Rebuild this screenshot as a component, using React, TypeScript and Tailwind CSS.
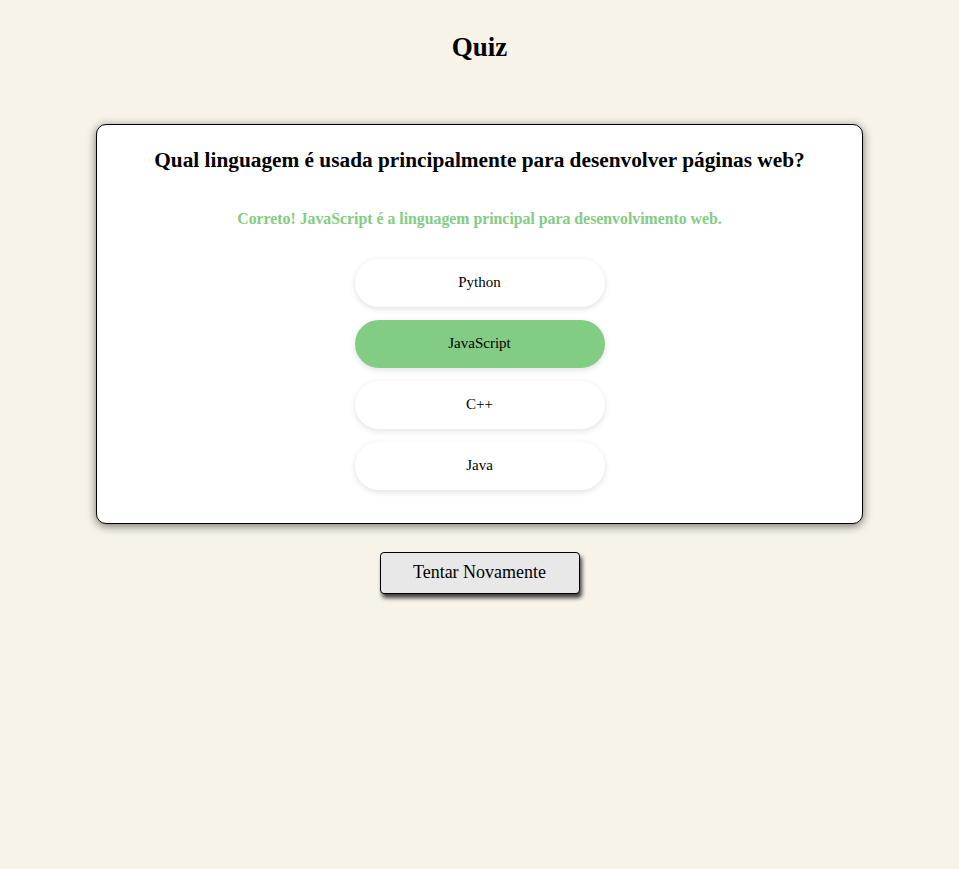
import React from 'react'

const options = ['Python', 'JavaScript', 'C++', 'Java']

const App = () => {
    const correct = 'JavaScript'
    return (
        <div className="min-h-screen w-full bg-[#f7f3e9] font-['Liberation_Serif',serif] text-black flex flex-col items-center">
            <h1 className="mt-[28px] text-[27px] font-bold leading-[38px]">Quiz</h1>

            <div className="mt-[58px] w-4/5 bg-white border border-black rounded-[10px] shadow-[0_2px_10px_rgba(0,0,0,0.55)] flex flex-col items-center pt-[21px] pb-[33px]">
                <h2 className="text-[21.3px] font-bold leading-[28px]">
                    Qual linguagem é usada principalmente para desenvolver páginas web?
                </h2>
                <p className="mt-[35px] text-[15.8px] font-bold leading-[20px] text-[#83cc84]">
                    Correto! JavaScript é a linguagem principal para desenvolvimento web.
                </p>
                <div className="mt-[30px] flex flex-col gap-[13px]">
                    {options.map((opt) => (
                        <button
                            key={opt}
                            className={
                                "w-[250px] h-[48px] rounded-full text-[15px] leading-[18px] pb-[2px] shadow-[0_2px_6px_rgba(0,0,0,0.12)] " +
                                (opt === correct ? "bg-[#83cc84]" : "bg-white")
                            }
                        >
                            {opt}
                        </button>
                    ))}
                </div>
            </div>

            <button className="mt-[28px] w-[200px] h-[42px] pb-[3px] bg-[#e8e8e8] border border-black rounded-[4px] shadow-[2px_4px_4px_rgba(0,0,0,0.75)] text-[18px] leading-[22px]">
                Tentar Novamente
            </button>
        </div>
    )
}

export default App
